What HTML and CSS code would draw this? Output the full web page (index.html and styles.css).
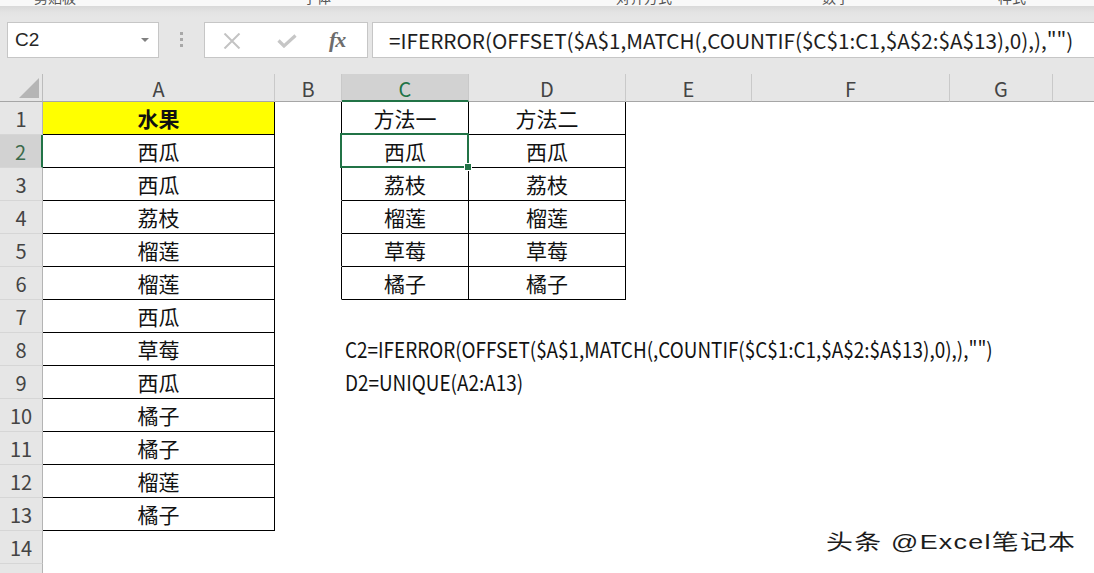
FILE: index.html
```html
<!DOCTYPE html>
<html lang="zh-CN">
<head>
<meta charset="utf-8">
<title>Excel</title>
<link rel="stylesheet" href="styles.css">
</head>
<body>
<div class="app">
  <div class="ribbon">
    <span class="g g1">剪贴板</span>
    <span class="g g2">字体</span>
    <span class="g g3">对齐方式</span>
    <span class="g g4">数字</span>
    <span class="g g5">样式</span>
  </div>
  <div class="fbar">
    <div class="namebox"><span>C2</span><span class="caret"></span></div>
    <div class="dots"><i></i><i></i><i></i></div>
    <div class="fnbox">
      <svg class="ico-x" width="18" height="16" viewBox="0 0 18 16"><path d="M1.5 0.5 L16.5 15.5 M16.5 0.5 L1.5 15.5" stroke="#c3c3c3" stroke-width="2" fill="none"/></svg>
      <svg class="ico-ok" width="20" height="14" viewBox="0 0 20 14"><path d="M1.5 6.5 L7 12 L18.5 1.5" stroke="#c6c6c6" stroke-width="3.2" fill="none"/></svg>
      <span class="fx">fx</span>
    </div>
    <div class="formula">=IFERROR(OFFSET($A$1,MATCH(,COUNTIF($C$1:C1,$A$2:$A$13),0),),"")</div>
  </div>
  <div class="sheet">
    <div class="corner"><span class="tri"></span></div>
    <div class="ch">A</div>
    <div class="ch">B</div>
    <div class="ch sel">C</div>
    <div class="ch">D</div>
    <div class="ch">E</div>
    <div class="ch">F</div>
    <div class="ch">G</div>
    <div class="ch last"></div>

    <div class="rh">1</div><div class="cl t head">水果</div><div class="cl br"></div><div class="cl t">方法一</div><div class="cl t">方法二</div><div class="cl rest"></div>
    <div class="rh rsel">2</div><div class="cl t">西瓜</div><div class="cl br"></div><div class="cl t active">西瓜<span class="selbox"><span class="handle"></span></span></div><div class="cl t">西瓜</div><div class="cl rest"></div>
    <div class="rh">3</div><div class="cl t">西瓜</div><div class="cl br"></div><div class="cl t">荔枝</div><div class="cl t">荔枝</div><div class="cl rest"></div>
    <div class="rh">4</div><div class="cl t">荔枝</div><div class="cl br"></div><div class="cl t">榴莲</div><div class="cl t">榴莲</div><div class="cl rest"></div>
    <div class="rh">5</div><div class="cl t">榴莲</div><div class="cl br"></div><div class="cl t">草莓</div><div class="cl t">草莓</div><div class="cl rest"></div>
    <div class="rh">6</div><div class="cl t">榴莲</div><div class="cl br"></div><div class="cl t">橘子</div><div class="cl t">橘子</div><div class="cl rest"></div>
    <div class="rh">7</div><div class="cl t">西瓜</div><div class="cl"></div><div class="cl"></div><div class="cl"></div><div class="cl rest"></div>
    <div class="rh">8</div><div class="cl t">草莓</div><div class="cl"></div><div class="cl note"><span>C2=IFERROR(OFFSET($A$1,MATCH(,COUNTIF($C$1:C1,$A$2:$A$13),0),),"")</span></div><div class="cl"></div><div class="cl rest"></div>
    <div class="rh">9</div><div class="cl t">西瓜</div><div class="cl"></div><div class="cl note"><span>D2=UNIQUE(A2:A13)</span></div><div class="cl"></div><div class="cl rest"></div>
    <div class="rh">10</div><div class="cl t">橘子</div><div class="cl"></div><div class="cl"></div><div class="cl"></div><div class="cl rest"></div>
    <div class="rh">11</div><div class="cl t">橘子</div><div class="cl"></div><div class="cl"></div><div class="cl"></div><div class="cl rest"></div>
    <div class="rh">12</div><div class="cl t">榴莲</div><div class="cl"></div><div class="cl"></div><div class="cl"></div><div class="cl rest"></div>
    <div class="rh">13</div><div class="cl t">橘子</div><div class="cl"></div><div class="cl"></div><div class="cl"></div><div class="cl rest"></div>
    <div class="rh">14</div><div class="cl"></div><div class="cl"></div><div class="cl"></div><div class="cl"></div><div class="cl rest"></div>
    <div class="rh">15</div><div class="cl"></div><div class="cl"></div><div class="cl"></div><div class="cl"></div><div class="cl rest"></div>
  </div>
  <div class="watermark"><span>头条 @Excel笔记本</span></div>
</div>
</body>
</html>
```
FILE: styles.css
```css
html, body {
  margin: 0;
  padding: 0;
}
body {
  width: 1094px;
  height: 573px;
  overflow: hidden;
  background: #e6e6e6;
  font-family: "Noto Sans CJK SC", "Liberation Sans", sans-serif;
}
.app {
  position: relative;
  width: 1094px;
  height: 573px;
  overflow: hidden;
}

/* ribbon remnant */
.ribbon {
  height: 6px;
  background: #f8f8f8;
  overflow: hidden;
  display: flex;
  font-size: 14px;
  line-height: 14px;
  color: #555;
}
.g { margin-top: -10px; white-space: nowrap; }
.g1 { margin-left: 34px; }
.g2 { margin-left: 227px; }
.g3 { margin-left: 285px; }
.g4 { margin-left: 150px; }
.g5 { margin-left: 148px; }

/* formula bar */
.fbar {
  height: 68px;
  box-sizing: border-box;
  padding-top: 16px;
  display: flex;
  align-items: flex-start;
  background: linear-gradient(#d8d8d8 0, #e3e3e3 6px, #e6e6e6 12px);
}
.namebox {
  margin-left: 7px;
  width: 152px;
  height: 36px;
  box-sizing: border-box;
  background: #fff;
  border: 1px solid #c6c6c6;
  display: flex;
  align-items: center;
  justify-content: space-between;
  padding: 0 9px 0 7px;
  font-family: "Liberation Sans", sans-serif;
  font-size: 19px;
  color: #262626;
}
.caret {
  width: 0;
  height: 0;
  border-left: 4px solid transparent;
  border-right: 4px solid transparent;
  border-top: 4px solid #808080;
}
.dots {
  width: 45px;
  padding-top: 10px;
  display: flex;
  flex-direction: column;
  align-items: center;
  gap: 3px;
}
.dots i {
  display: block;
  width: 3px;
  height: 3px;
  background: #a8a8a8;
}
.fnbox {
  width: 164px;
  height: 36px;
  box-sizing: border-box;
  background: #fff;
  border: 1px solid #c6c6c6;
  display: flex;
  align-items: center;
  padding-left: 18px;
}
.ico-x { margin-top: 1px; }
.ico-ok { margin-left: 36px; margin-top: 2px; }
.fx {
  margin-left: 32px;
  font-family: "Liberation Serif", serif;
  font-style: italic;
  font-weight: bold;
  font-size: 22px;
  color: #6d6d6d;
  letter-spacing: -1px;
}
.formula {
  flex: 1;
  margin-left: 4px;
  margin-right: -4px;
  height: 36px;
  box-sizing: border-box;
  background: #fff;
  border: 1px solid #c6c6c6;
  padding-left: 16px;
  display: flex;
  align-items: center;
  font-size: 20.7px;
  color: #1e1e1e;
  white-space: nowrap;
}

/* sheet */
.sheet {
  height: 499px;
  overflow: hidden;
  background: #fff;
  display: grid;
  grid-template-columns: 43px 232px 67px 127px 157px 126px 198px 103px 1fr;
  grid-template-rows: 28px;
  grid-auto-rows: 33px;
}
.corner {
  background: #e6e6e6;
  border-right: 1px solid #bcbcbc;
  border-bottom: 1px solid #a6a6a6;
  box-sizing: border-box;
  display: flex;
  align-items: flex-end;
  justify-content: flex-end;
  padding: 0 3px 3px 0;
}
.tri {
  width: 0;
  height: 0;
  border-left: 20px solid transparent;
  border-bottom: 20px solid #b5b5b5;
}
.ch {
  background: #e6e6e6;
  border-right: 1px solid #c9c9c9;
  border-bottom: 1px solid #a6a6a6;
  box-sizing: border-box;
  display: flex;
  align-items: center;
  justify-content: center;
  font-size: 20px;
  color: #444;
  padding-top: 2px;
}
.ch.sel {
  background: #d2d2d2;
  color: #217346;
  border-bottom: 2px solid #217346;
}
.ch.last { border-right: none; }
.rh {
  background: #e6e6e6;
  border-right: 1px solid #b4b4b4;
  border-bottom: 1px solid #d6d6d6;
  box-sizing: border-box;
  display: flex;
  align-items: center;
  justify-content: center;
  font-size: 20px;
  color: #444;
}
.rh.rsel {
  background: #d2d2d2;
  color: #3c6a4b;
  border-right: 2px solid #217346;
}
.cl {
  box-sizing: border-box;
  border-right: 1px solid transparent;
  border-bottom: 1px solid transparent;
  display: flex;
  align-items: center;
  justify-content: center;
  font-size: 21px;
  color: #111;
  white-space: nowrap;
}
.cl.rest { grid-column: span 4; }
.cl.t {
  border-right-color: #000;
  border-bottom-color: #000;
}
.cl.br { border-right-color: #000; }
.cl.head {
  background: #ffff00;
  font-weight: bold;
}
.cl.active { position: relative; }
.selbox {
  position: absolute;
  left: -2px;
  top: -2px;
  right: -1px;
  bottom: -1px;
  border: 2px solid #217346;
}
.handle {
  position: absolute;
  right: -5px;
  bottom: -5px;
  width: 6px;
  height: 6px;
  background: #217346;
  border: 1px solid #fff;
}
.cl.note {
  justify-content: flex-start;
  padding-left: 3px;
  overflow: visible;
  position: relative;
  z-index: 1;
}
.cl.note span {
  display: inline-block;
  font-size: 21px;
  transform: scaleX(0.9);
  transform-origin: 0 50%;
  color: #111;
}

/* watermark */
.watermark {
  position: absolute;
  left: 826px;
  bottom: 18px;
  font-family: "Liberation Sans", "Noto Sans CJK SC", sans-serif;
  font-size: 21px;
  letter-spacing: 1px;
  color: #1c1c1c;
  white-space: nowrap;
}
.watermark span {
  display: inline-block;
  transform: scaleX(1.28);
  transform-origin: 0 50%;
  text-shadow: 1px 1px 0 #fff;
}
```
